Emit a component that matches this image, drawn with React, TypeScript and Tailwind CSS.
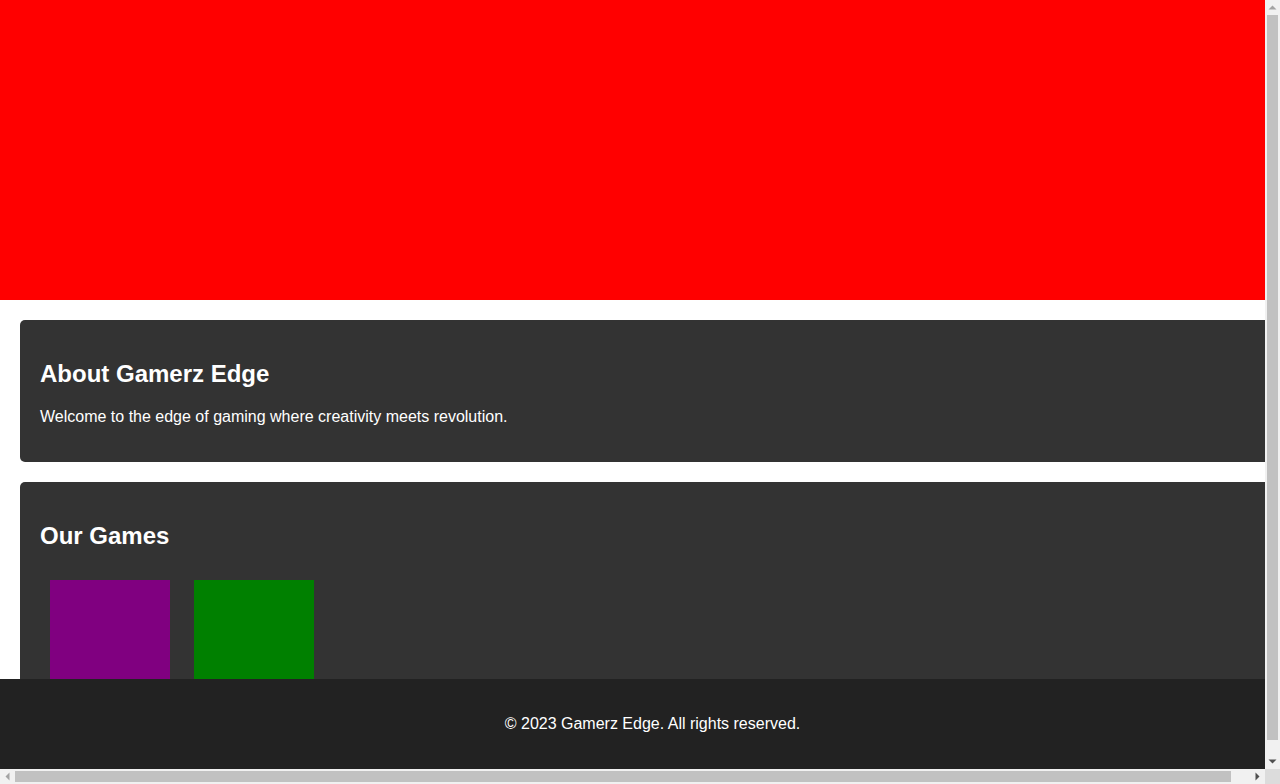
function Arrow({ dir, dim }: { dir: 'up' | 'down' | 'left' | 'right'; dim?: boolean }) {
  const pts = {
    up: '3.5,9.5 7.5,5.5 11.5,9.5',
    down: '3.5,5.5 7.5,9.5 11.5,5.5',
    left: '9.5,3.5 5.5,7.5 9.5,11.5',
    right: '5.5,3.5 9.5,7.5 5.5,11.5',
  }[dir];
  return (
    <svg width="15" height="15" viewBox="0 0 15 15" className="block shrink-0">
      <polygon points={pts} fill={dim ? '#a3a3a3' : '#505050'} />
    </svg>
  );
}

export default function App() {
  const games = ['bg-[#800080]', 'bg-[#008000]'];

  return (
    <div className="grid h-[784px] w-[1280px] grid-cols-[1265px_15px] grid-rows-[769px_15px] overflow-hidden font-['Liberation_Sans',Arial,sans-serif] leading-[normal] text-[16px] text-white bg-white">
      {/* page viewport */}
      <div className="relative overflow-hidden">
        <header className="h-[300px] w-full bg-[#ff0000]"></header>

        <section className="m-5 w-full rounded-[5px] bg-[#333333] p-5">
          <h2 className="my-[19.92px] text-[24px] font-bold">About Gamerz Edge</h2>
          <p className="my-4">Welcome to the edge of gaming where creativity meets revolution.</p>
        </section>

        <section className="m-5 w-full rounded-[5px] bg-[#333333] p-5">
          <h2 className="my-[19.92px] text-[24px] font-bold">Our Games</h2>
          <div className="flex gap-[4px]">
            {games.map((c, i) => (
              <div key={i} className={`m-[10px] h-[150px] w-[120px] ${c}`}></div>
            ))}
          </div>
        </section>

        <footer className="absolute bottom-0 left-0 box-content w-full bg-[#222222] p-5 text-center">
          <p className="my-4">© 2023 Gamerz Edge. All rights reserved.</p>
        </footer>
      </div>

      {/* vertical scrollbar */}
      <div className="flex flex-col bg-[#f1f1f1]">
        <Arrow dir="up" dim />
        <div className="flex-1 px-[2px]">
          <div className="h-[725px] w-full bg-[#c1c1c1]"></div>
        </div>
        <Arrow dir="down" />
      </div>

      {/* horizontal scrollbar */}
      <div className="flex bg-[#f1f1f1]">
        <Arrow dir="left" dim />
        <div className="flex-1 py-[2px]">
          <div className="h-full w-[1216px] bg-[#c1c1c1]"></div>
        </div>
        <Arrow dir="right" />
      </div>

      <div className="bg-[#dcdcdc]"></div>
    </div>
  );
}
